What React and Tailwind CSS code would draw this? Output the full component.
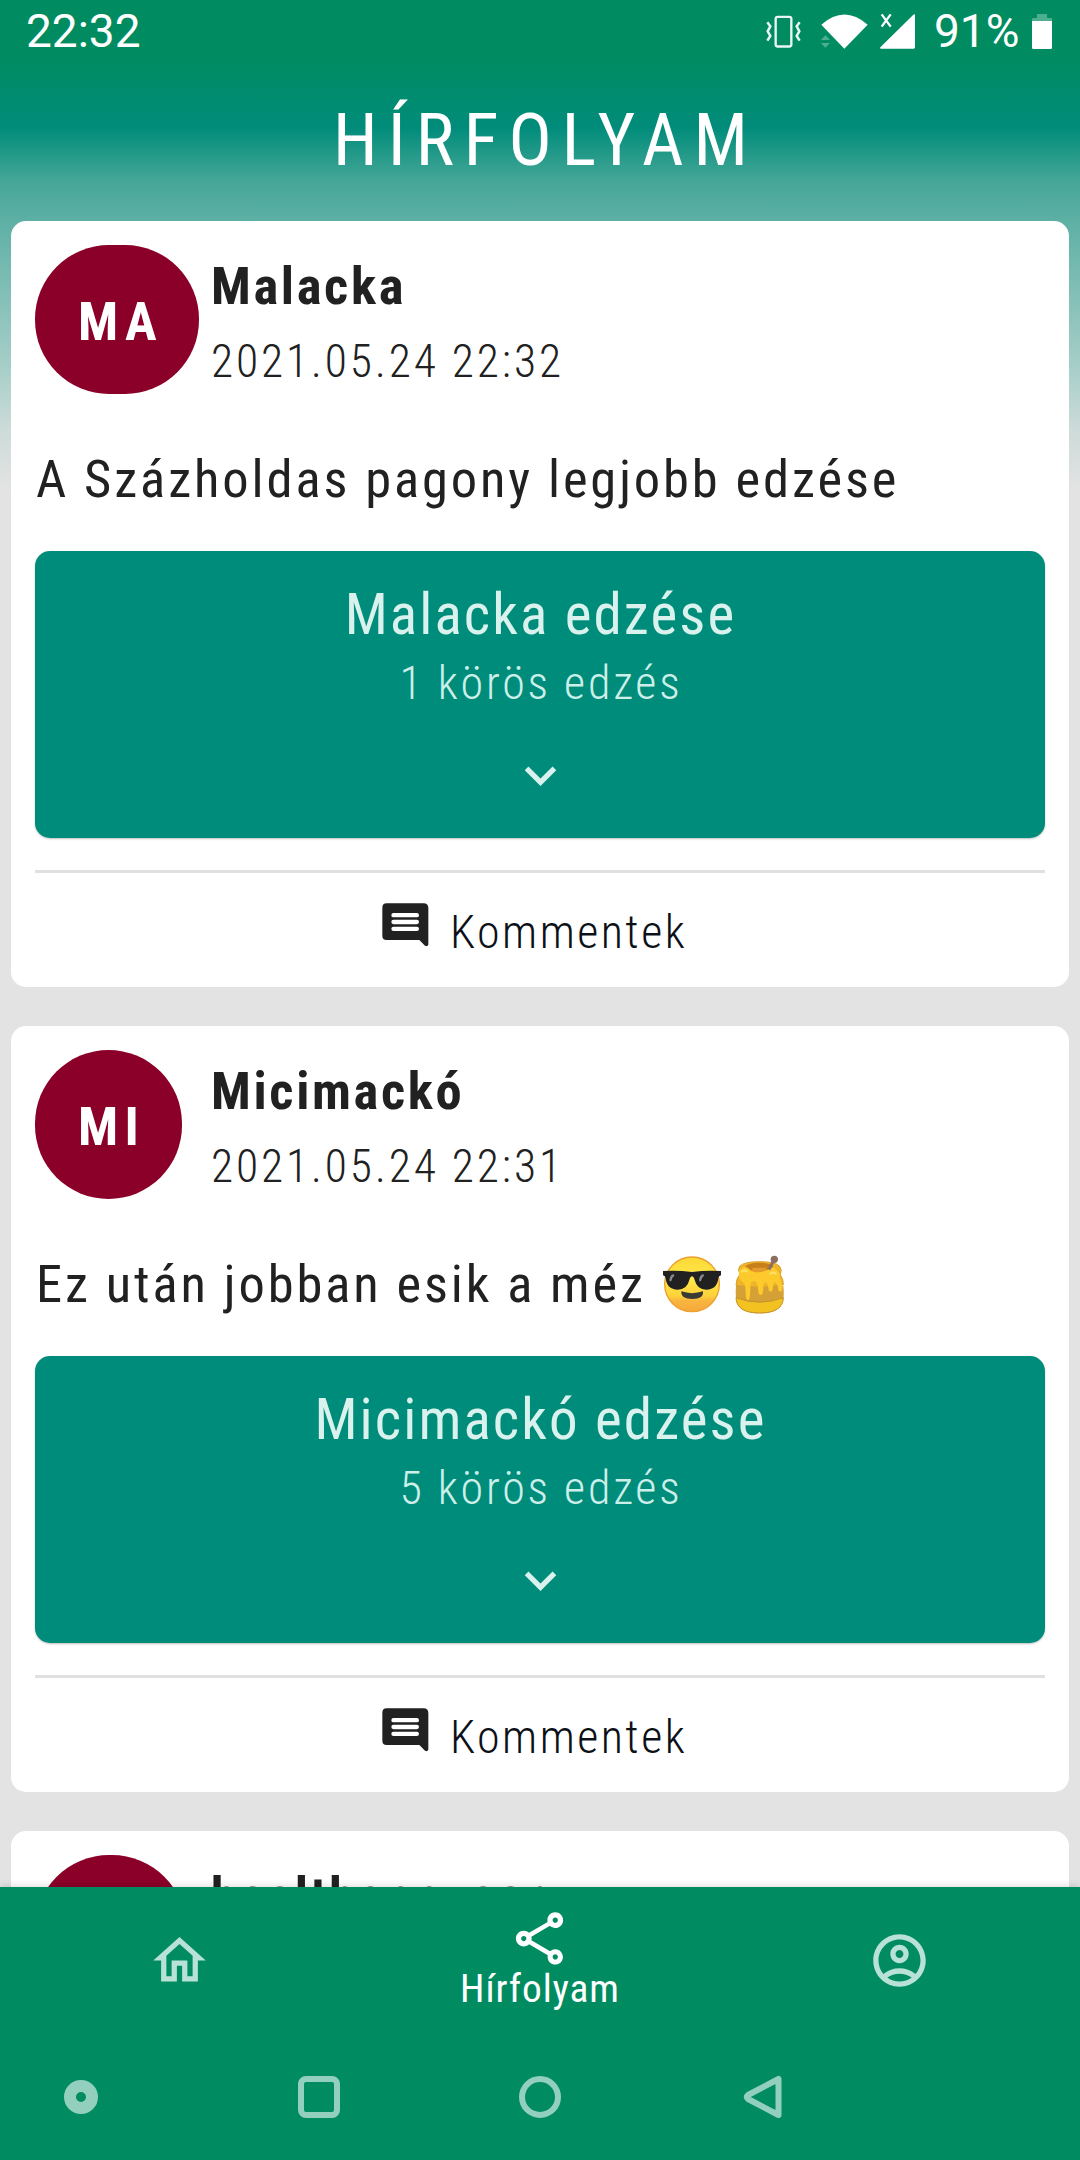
import { MdExpandMore, MdOutlineAccountCircle, MdOutlineHome, MdOutlineShare } from "react-icons/md";

function VibrateIcon() {
  return (
    <svg className="h-[63px] w-[37px]" viewBox="30 -15 111 189" fill="none" stroke="#fff" opacity="0.92">
      <rect x="62" y="35.500" width="47" height="89" rx="6" strokeWidth="7" />
      <path d="M37 52l9 12-8 15 8 14-9 14M134 52l-9 12 8 15-8 14 9 14" strokeWidth="7.500" />
    </svg>
  );
}

function WifiIcon() {
  return (
    <svg className="ml-[18px] h-[63px] w-[50px]" viewBox="195 -15 150 189" fill="#fff">
      <path d="M199 59Q268 -2 338 59L268 131Z" />
      <path d="M198 105l13-14 14 14ZM198 114h27l-14 14Z" opacity="0.3" />
    </svg>
  );
}

function SignalIcon() {
  return (
    <svg className="ml-[9px] h-[63px] w-[37px]" viewBox="372 -15 111 189" fill="#fff">
      <path d="M377 131q-3-1-1-4L475 29q5-4 5 2v96q0 4-4 4Z" />
      <path d="M380 28l27 37M407 28l-27 37" stroke="#fff" strokeWidth="7" />
    </svg>
  );
}

function BatteryIcon() {
  return (
    <svg className="ml-[10px] h-[63px] w-[24px]" viewBox="420 -15 72 189" fill="#fff">
      <path d="M441 27h30v12h11q4 0 4 4v5h-60v-5q0-4 4-4h11Z" opacity="0.3" />
      <path d="M426 48h60v80q0 4-4 4h-52q-4 0-4-4Z" />
    </svg>
  );
}

function SunglassesEmoji() {
  return (
    <svg role="img" aria-label="😎" className="ml-[17px] h-[57px] w-[58px]" viewBox="128 77 174 171">
      <defs>
        <linearGradient id="face" x1="0" y1="0" x2="0" y2="1">
          <stop offset="0" stopColor="#fcd835" />
          <stop offset="0.4" stopColor="#ffe94a" />
          <stop offset="0.72" stopColor="#fdd13a" />
          <stop offset="0.8" stopColor="#f9b53f" />
          <stop offset="1" stopColor="#f4a83c" />
        </linearGradient>
      </defs>
      <circle cx="215" cy="162" r="82" fill="url(#face)" stroke="#eda02f" strokeWidth="4" />
      <path d="M128 122q44-3 87 3 43-6 87-3v13q-7 1-8 9-4 34-36 34-28 0-35-29-3-11-8-11t-8 11q-7 29-35 29-32 0-36-34-1-8-8-9Z" fill="#212121" />
      <path d="M147 149q2-15 12-17 5 0 2 6-6 3-8 14-5 4-6-3M236 149q2-15 12-17 5 0 2 6-6 3-8 14-5 4-6-3" fill="#8a8a8a" />
      <path d="M183 183q32 11 65 0 3 23-32 23-35 0-33-23" fill="#3b3b35" />
    </svg>
  );
}

function HoneyEmoji() {
  return (
    <svg role="img" aria-label="🍯" className="ml-[14px] h-[59px] w-[49px]" viewBox="346 74 147 177">
      <path d="M349 166q-2 28 1 46 10 37 70 37t70-37q4-20 1-46Z" fill="#d5a136" />
      <path d="M349 202q70 27 142 0-1 46-71 46t-71-46" fill="#f3c220" stroke="#c4922f" strokeWidth="3" />
      <path d="M360 108q12-14 60-14t60 14q8 10 2 25 10 14 9 30-70 14-142 2 0-20 12-33-8-12-1-24" fill="#f0b429" stroke="#d9a02c" strokeWidth="3" />
      <ellipse cx="419" cy="110" rx="42" ry="13" fill="#c77f1c" />
      <path d="M398 112h42v13q-20 8-42 1Z" fill="#e59a2c" />
      <path d="M362 118q10-14 24-4 12 14 30 12t28-8q14-14 26 0 12 8 10 22l8 28q1 16-6 16t-7-14q-4-14-10-14-6 2-5 12 0 16-7 16t-7-14q-2-14-10-14-6 2-5 14 0 24-8 24t-8-22q-2-20-12-20-10 0-11 14 0 44-7 44t-7-24q0-30-10-32-14-8-9-36" fill="#fdca2c" />
      <path d="M366 124q8-8 16 0M452 130q8-8 16 0" stroke="#ffe36b" strokeWidth="6" fill="none" strokeLinecap="round" />
      <path d="M448 118l13-26" stroke="#8d6e63" strokeWidth="9" />
      <circle cx="464" cy="87" r="11" fill="#8d6e63" />
    </svg>
  );
}

function CommentIcon() {
  return (
    <svg className="mt-[13px] h-[44px] w-[47px]" viewBox="0 0 141 132">
      <path d="M14 1h111q14 0 14 14v110q-3 7-10 3l-17-17H14Q1 111 1 98V14Q1 1 14 1Z" fill="#212121" />
      <path d="M34.5 36.5h70M34.5 57h70M34.5 77.5h70" stroke="#fff" strokeWidth="13" strokeLinecap="round" />
    </svg>
  );
}

function Post({ initials, avatar, name, date, text, emojis, workout, rounds }) {
  return (
    <article className="h-[766px] shrink-0 rounded-[15px] bg-white px-[24px] pt-[24px] text-[#212121]">
      <header className="flex h-[198px]">
        <div className="w-[176px]">
          <div className={`${avatar} flex h-[149px] rounded-[74px] bg-[#8b0028] pl-[43px] text-[53px] leading-[154px] font-bold tracking-[6.3px] text-white`}>
            {initials}
          </div>
        </div>
        <div className="pt-[5px] whitespace-nowrap">
          <h2 className="text-[52.5px] leading-[72px] font-bold tracking-[2.65px]">{name}</h2>
          <p className="text-[45.5px] leading-[80px] font-light tracking-[2.89px]">{date}</p>
        </div>
      </header>
      <div className="flex h-[72px] items-center pl-px text-[52.5px] leading-[72px] tracking-[2.88px] whitespace-nowrap">
        <p>{text}</p>
        {emojis}
      </div>
      <section className="mt-[36px] flex h-[287px] flex-col items-center rounded-[15px] bg-[#008c7a] pt-[31px] text-[#d9f2ee] shadow-[0_1px_2px_rgba(0,0,0,0.25)]">
        <h3 className="pl-px text-[57px] leading-[66px] tracking-[2.1px]">{workout}</h3>
        <p className="pl-[2px] text-[46px] leading-[70px] font-light tracking-[2.8px] text-[#ccefe9]">{rounds}</p>
        <MdExpandMore className="mt-[26px] ml-px size-[63px]" />
      </section>
      <div className="mt-[32px] h-[3px] bg-[#e0e0e0]" />
      <button className="flex h-[114px] w-full items-start pt-[17px] pl-[347px]">
        <CommentIcon />
        <span className="ml-[21px] text-[46px] leading-[84px] font-light tracking-[2.45px] text-[#0c1118]">Kommentek</span>
      </button>
    </article>
  );
}

export default function App() {
  return (
    <div className="flex h-[2160px] w-[1080px] flex-col overflow-hidden bg-[#e3e3e3] bg-[linear-gradient(to_bottom,#008c60_0px,#008c60_55px,#008c7a_127px,#44a697_180px,#60b1a6_225px,#a8cfc9_370px,#cddbd9_430px,#e3e3e3_490px)] font-['Roboto_Condensed',Roboto,sans-serif]">
      <div className="flex h-[63px] shrink-0 items-start pr-[26px] pl-[26px] font-[Roboto,sans-serif] text-[46px] leading-[63px] text-white">
        <span className="mr-auto">22:32</span>
        <VibrateIcon />
        <WifiIcon />
        <SignalIcon />
        <span className="ml-[18px] w-[86px]">91%</span>
        <BatteryIcon />
      </div>
      <h1 className="h-[158px] shrink-0 pl-[11px] text-center text-[72px] leading-[155px] tracking-[10px] text-white">HÍRFOLYAM</h1>
      <main className="flex h-[1666px] shrink-0 flex-col gap-[39px] overflow-hidden px-[11px]">
        <Post initials="MA" avatar="w-[164px]" name="Malacka" date="2021.05.24 22:32" text="A Százholdas pagony legjobb edzése" workout="Malacka edzése" rounds="1 körös edzés" />
        <Post
          initials="MI"
          avatar="w-[147px]"
          name="Micimackó"
          date="2021.05.24 22:31"
          text="Ez után jobban esik a méz"
          emojis={<><SunglassesEmoji /><HoneyEmoji /></>}
          workout="Micimackó edzése"
          rounds="5 körös edzés"
        />
        <Post initials="" avatar="w-[151px]" name="healthappuser" />
      </main>
      <nav className="relative grid h-[147px] shrink-0 grid-cols-3 justify-items-center bg-[#008c60] text-[#b8e2d5] shadow-[0_-2px_6px_rgba(0,0,0,0.12)]">
        <MdOutlineHome className="mr-[2px] size-[63px] self-center" />
        <div className="flex flex-col items-center pt-[20px] text-white">
          <MdOutlineShare className="size-[63px]" />
          <span className="text-[39.4px] leading-[37px] tracking-[0.88px]">Hírfolyam</span>
        </div>
        <MdOutlineAccountCircle className="mr-[2px] size-[63px] self-center" />
      </nav>
      <footer className="relative flex h-[126px] shrink-0 items-center bg-[#008c60] pl-[64px]">
        <span className="size-[34px] rounded-full border-[12px] border-[#92cfbd]" />
        <span className="ml-[200px] size-[42px] rounded-[8px] border-[6px] border-[#92cfbd]" />
        <span className="ml-[179px] size-[42px] rounded-full border-[6px] border-[#92cfbd]" />
        <svg className="ml-[182px] h-[44px] w-[39px]" viewBox="0 0 39 44" fill="none" stroke="#92cfbd" strokeWidth="6" strokeLinejoin="round">
          <path d="M35.5 4v36L5 24q-2.500-2 0-4Z" />
        </svg>
      </footer>
    </div>
  );
}
